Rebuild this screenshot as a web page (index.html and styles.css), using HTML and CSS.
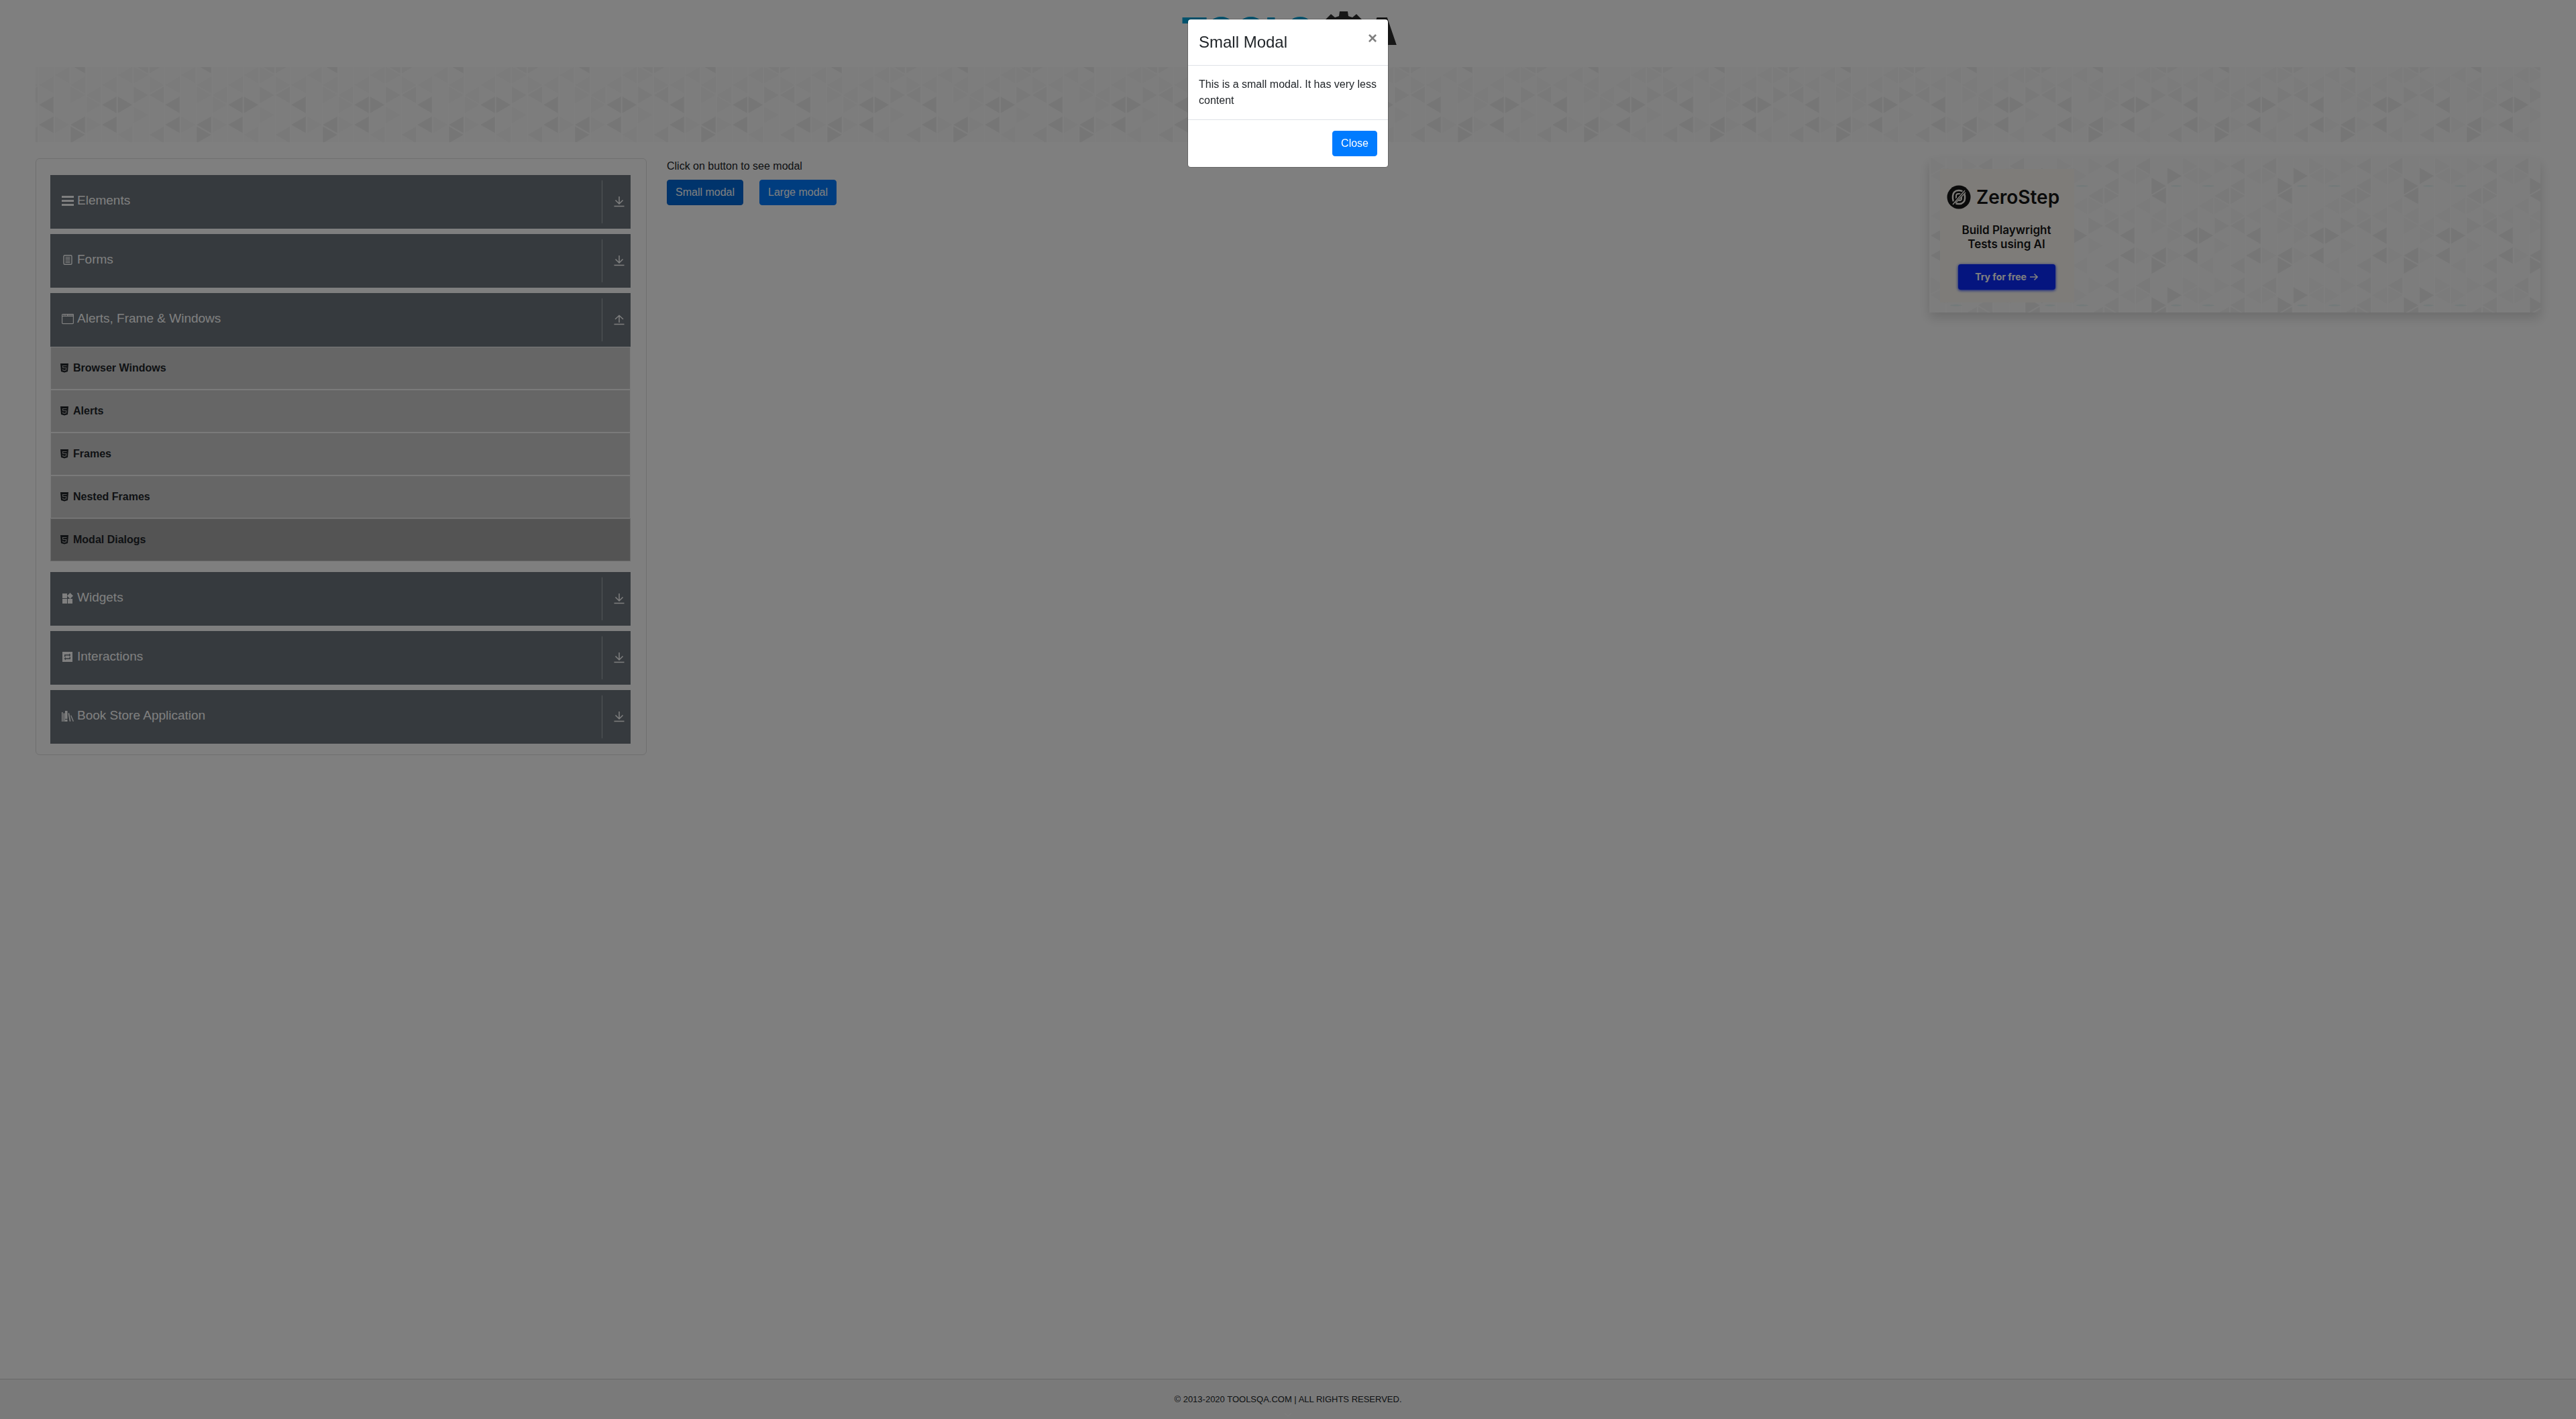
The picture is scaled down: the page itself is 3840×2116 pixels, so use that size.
FILE: index.html
```html
<!DOCTYPE html>
<html lang="en">
<head>
<meta charset="utf-8">
<title>ToolsQA</title>
<link rel="stylesheet" href="styles.css">
</head>
<body>
<svg class="sprite" aria-hidden="true">
  <symbol id="i-down" viewBox="0 0 16 16"><path d="M8 0v11M2.500 5.500L8 11l5.500-5.500M0.500 14.500h15" fill="none" stroke="currentColor" stroke-width="1.500"/></symbol>
  <symbol id="i-up" viewBox="0 0 16 16"><path d="M8 12V1.500M2 7l6-5.500L14 7M0.500 14.500h15" fill="none" stroke="currentColor" stroke-width="1.500"/></symbol>
  <symbol id="i-html" viewBox="0 0 12 14"><path fill="currentColor" d="M0 0h12l-1 12-5 1.500L1 12z"/><path d="M9.500 3.500h-6l.3 3h5l-.3 3.300L6 10.500l-2.300-.7-.1-1.300" fill="none" stroke="#a8a8a8" stroke-width="1.200"/></symbol>
</svg>
<div class="page">
  <header class="top">
    <a class="logo" href="#" aria-label="Tools QA">
      <svg width="316" height="64" viewBox="0 0 316 64">
        <text class="logo-text" x="-1" y="54" fill="#00a5db">TOOLS</text>
        <path fill="#2f2f2f" d="M235 4h12l1 7 6 2 6-5 9 9-5 6 3 6 7 1v12l-7 1-3 6 5 6-9 9-6-5-6 2-1 3h-12l-1-3-6-2-6 5-9-9 5-6-3-6-7-1V30l7-1 3-6-5-6 9-9 6 5 6-2z"/>
        <circle cx="241" cy="34" r="14" fill="#fff"/>
        <text class="logo-text" x="321" y="54" text-anchor="end" fill="#2f2f2f">A</text>
      </svg>
    </a>
  </header>
  <div class="banner pattern"></div>
  <main class="columns">
    <nav class="menu">
      <section><button class="group" type="button"><svg class="icon" viewBox="0 0 18 16"><path fill="currentColor" d="M0 0h18v3H0zM0 6h18v3H0zM0 12h18v3H0z"/></svg><span class="name">Elements</span><span class="toggle"><svg><use href="#i-down"/></svg></span></button></section>
      <section><button class="group" type="button"><svg class="icon" viewBox="0 0 18 16"><rect x="3" y=".7" width="12" height="13.600" rx="1.500" fill="none" stroke="currentColor" stroke-width="1.400"/><path stroke="currentColor" d="M5.500 3.500h7M5.500 5.500h7M5.500 7.500h7M5.500 9.500h7M5.500 11.500h7"/></svg><span class="name">Forms</span><span class="toggle"><svg><use href="#i-down"/></svg></span></button></section>
      <section>
        <button class="group" type="button"><svg class="icon" viewBox="0 0 18 16"><rect x=".6" y=".6" width="16.800" height="14" rx="1" fill="none" stroke="currentColor" stroke-width="1.200"/><path stroke="currentColor" d="M0 3.500h18M3.500 0v3M6 0v3M8.500 0v3"/><path fill="currentColor" opacity=".5" d="M9 0h9v3H9z"/></svg><span class="name">Alerts, Frame &amp; Windows</span><span class="toggle"><svg><use href="#i-up"/></svg></span></button>
        <ul class="items">
          <li><a href="#"><svg><use href="#i-html"/></svg>Browser Windows</a></li>
          <li><a href="#"><svg><use href="#i-html"/></svg>Alerts</a></li>
          <li><a href="#"><svg><use href="#i-html"/></svg>Frames</a></li>
          <li><a href="#"><svg><use href="#i-html"/></svg>Nested Frames</a></li>
          <li class="active"><a href="#"><svg><use href="#i-html"/></svg>Modal Dialogs</a></li>
        </ul>
      </section>
      <section><button class="group" type="button"><svg class="icon" viewBox="0 0 18 16"><path fill="currentColor" d="M1 1h7v7H1zM1 9h7v7H1zM9 9h7v7H9zM12.500 0L17 4.500 12.500 9 8 4.500z"/></svg><span class="name">Widgets</span><span class="toggle"><svg><use href="#i-down"/></svg></span></button></section>
      <section><button class="group" type="button"><svg class="icon" viewBox="0 0 18 16"><path fill="currentColor" fill-rule="evenodd" d="M1 0h15v15H1zM4 4v3.500h1.500v-2H11V7l2.500-2.300L11 2.500V4zM13 11V7.500h-1.500v2H6V8l-2.500 2.300L6 12.500V11z"/></svg><span class="name">Interactions</span><span class="toggle"><svg><use href="#i-down"/></svg></span></button></section>
      <section><button class="group" type="button"><svg class="icon" viewBox="0 0 18 16"><path fill="currentColor" d="M0 2h1.500v14H0zM2.500 3.500h2V16h-2zM5 0h3.500v12H5zM5 13h3.500v3H5zM9.500 3.500l1.700-.3L13.500 15.600l-1.700.3zM13 7l1.200-.4L18 15.400l-1.300.5z"/></svg><span class="name">Book Store Application</span><span class="toggle"><svg><use href="#i-down"/></svg></span></button></section>
    </nav>
    <section class="content">
      <p>Click on button to see modal</p>
      <div class="actions">
        <button class="btn pressed" type="button">Small modal</button>
        <button class="btn" type="button">Large modal</button>
      </div>
    </section>
    <aside class="promo pattern">
      <a class="ad" href="#">
        <span class="brand"><svg width="36" height="36" viewBox="0 0 36 36"><circle cx="18" cy="18" r="17.500" fill="#161616"/><rect x="9" y="8" width="18" height="20" rx="8" fill="none" stroke="#fcf9f2" stroke-width="2.500"/><rect x="14" y="13" width="8" height="10" rx="3" fill="none" stroke="#fcf9f2" stroke-width="2"/><path d="M8 30L28 8" stroke="#161616" stroke-width="5"/><path d="M9 29L27 8M13 27L28 11" stroke="#fcf9f2" stroke-width="1.500"/></svg>ZeroStep</span>
        <span class="pitch">Build Playwright<br>Tests using AI</span>
        <span class="cta">Try for free <svg width="12" height="12" viewBox="0 0 12 12"><path d="M0 6h11M6.500 1.500L11 6l-4.500 4.500" fill="none" stroke="currentColor" stroke-width="1.600"/></svg></span>
      </a>
    </aside>
  </main>
  <footer class="foot">© 2013-2020 TOOLSQA.COM | ALL RIGHTS RESERVED.<svg class="chevron" viewBox="0 0 12 6"><path d="M1 0l5 5 5-5" fill="none" stroke="currentColor"/></svg></footer>
</div>
<div class="overlay">
  <div class="modal" role="dialog" aria-modal="true" aria-labelledby="modal-title">
    <div class="modal-head"><h4 id="modal-title">Small Modal</h4><button class="dismiss" type="button" aria-label="Dismiss">×</button></div>
    <div class="modal-body">This is a small modal. It has very less content</div>
    <div class="modal-foot"><button class="btn" type="button">Close</button></div>
  </div>
</div>
</body>
</html>
```
FILE: styles.css
```css
*{box-sizing:border-box}
body{margin:0;font:16px/24px "Liberation Sans",Arial,sans-serif;color:#212529;background:#fff}
button{font:inherit;cursor:pointer}
a{color:inherit;text-decoration:none}
.sprite{position:absolute;width:0;height:0}
.page{min-height:100vh;display:flex;flex-direction:column}
.top{height:100px;display:flex;justify-content:center;align-items:flex-start;padding-top:13px}
.logo svg{overflow:visible}
.logo-text{font:900 57px Inter,"Liberation Sans",sans-serif}
.pattern{
  background-color:#fafafa;
  background-size:188px 178px;
  background-image:url("data:image/svg+xml,%3Csvg xmlns='http://www.w3.org/2000/svg' viewBox='0 0 564 534'%3E%3Cdefs%3E%3Cpath id='r' d='M3 -37L67 0L3 37z'/%3E%3Cpath id='l' d='M67 -37L3 0L67 37z'/%3E%3C/defs%3E%3Cg fill='%23ededed'%3E%3Cuse href='%23r' x='497' y='79'/%3E%3Cuse href='%23r' x='427' y='124'/%3E%3Cuse href='%23l' x='427' y='168'/%3E%3Cuse href='%23l' x='4' y='346'/%3E%3Cuse href='%23r' x='74' y='346'/%3E%3Cuse href='%23l' x='286' y='346'/%3E%3Cuse href='%23l' x='4' y='435'/%3E%3Cuse href='%23l' x='286' y='435'/%3E%3Cuse href='%23l' x='427' y='435'/%3E%3Cuse href='%23r' x='427' y='480'/%3E%3C/g%3E%3Cg fill='%23f2f2f2'%3E%3Cuse href='%23l' x='145' y='168'/%3E%3Cuse href='%23r' x='216' y='168'/%3E%3Cuse href='%23r' x='145' y='302'/%3E%3Cuse href='%23l' x='216' y='302'/%3E%3Cuse href='%23l' x='216' y='480'/%3E%3Cuse href='%23l' x='216' y='35'/%3E%3Cuse href='%23l' x='216' y='124'/%3E%3Cuse href='%23l' x='357' y='35'/%3E%3C/g%3E%3Cg fill='%23f7f7f7'%3E%3Cuse href='%23r' x='357' y='79'/%3E%3Cuse href='%23r' x='74' y='79'/%3E%3Cuse href='%23l' x='4' y='79'/%3E%3Cuse href='%23l' x='286' y='79'/%3E%3Cuse href='%23r' x='145' y='35'/%3E%3Cuse href='%23r' x='4' y='35'/%3E%3Cuse href='%23l' x='74' y='213'/%3E%3Cuse href='%23r' x='145' y='213'/%3E%3Cuse href='%23r' x='216' y='257'/%3E%3Cuse href='%23l' x='286' y='257'/%3E%3Cuse href='%23l' x='427' y='257'/%3E%3Cuse href='%23l' x='4' y='257'/%3E%3Cuse href='%23r' x='427' y='302'/%3E%3Cuse href='%23l' x='497' y='302'/%3E%3Cuse href='%23r' x='497' y='346'/%3E%3Cuse href='%23r' x='145' y='391'/%3E%3Cuse href='%23r' x='357' y='435'/%3E%3Cuse href='%23r' x='497' y='435'/%3E%3Cuse href='%23l' x='74' y='480'/%3E%3Cuse href='%23l' x='357' y='213'/%3E%3C/g%3E%3Cg fill='none' stroke='%23fdfdfd' stroke-width='4'%3E%3Cpath d='M4 0V534M74 0V534M145 0V534M216 0V534M286 0V534M357 0V534M427 0V534M498 0V534'/%3E%3C/g%3E%3Cg fill='%23e6f4f4'%3E%3Cellipse cx='120' cy='124' rx='28' ry='4'/%3E%3Cellipse cx='540' cy='124' rx='24' ry='4'/%3E%3C/g%3E%3C/svg%3E");
}
.banner{height:112px;margin:0 53px;background-position:97px -59px}
.columns{flex:1;display:grid;grid-template-columns:repeat(12,minmax(0,1fr));column-gap:30px;align-items:start;padding:24px 53px}
.menu{grid-column:span 3;border:1px solid #dfdfdf;border-radius:6px;padding:24px 23px 8px 21px}
.menu section{margin-bottom:8px}
.group{display:flex;align-items:center;width:100%;height:80px;padding:8px 0 8px 17px;border:0;background:#6c757d;color:#fff;font-size:19px;text-align:left}
.icon{width:18px;height:16px;margin:0 5px 2px 0}
.name{flex:1;padding-bottom:4px}
.toggle{align-self:stretch;width:43px;border-left:1px solid #a7acb1;display:flex;align-items:center;padding-left:17px}
.toggle svg{width:16px;height:16px}
.items{list-style:none;margin:0 0 16px;padding:0}
.items li{height:64px;border:1px solid #f4f4f4;background:#ccc;font-weight:bold}
.items .active{background:#a9a9a9;border-color:#d2d2d2}
.items a{display:flex;align-items:center;height:100%;padding:0 14px}
.items svg{width:12px;height:14px;margin-right:7px}
.content{grid-column:span 6}
.content p{margin:0 0 8px}
.actions{display:flex;gap:24px}
.btn{height:38px;padding:6px 12px;border:1px solid #007bff;border-radius:4px;background:#007bff;color:#fff}
.pressed{background:#0069d9;border-color:#0062cc}
.promo{grid-column:span 3;padding:16px 16px 15px;box-shadow:0 8px 16px rgba(0,0,0,.15)}
.ad{width:200px;height:199px;background:#fcf9f2;display:flex;flex-direction:column;align-items:center;font-family:Inter,sans-serif;color:#161616;padding:24px 2px 0 0}
.brand{display:flex;align-items:center;gap:8px;height:36px;margin-right:10px;font-size:28px;font-weight:600}
.pitch{margin-top:21px;font-size:17px;line-height:21px;font-weight:600;text-align:center}
.cta{width:145px;height:38px;margin-top:19px;border-radius:4px;background:#0a2bff;color:#fff;font-size:14px;font-weight:700;display:flex;align-items:center;justify-content:center;gap:5px;box-shadow:0 1px 4px #0a2bff}
.foot{height:60px;border-top:1px solid #d0d0d0;background:#f5f5f5;font-size:13px;display:flex;flex-direction:column;align-items:center;padding-top:18px}
.chevron{width:12px;height:6px;margin-top:8px;color:#fff}
.overlay{position:fixed;inset:0;background:rgba(0,0,0,.5)}
.modal{width:300px;margin:28px auto;border:1px solid rgba(0,0,0,.2);border-radius:5px;background:#fff;background-clip:padding-box}
.modal-head{display:flex;justify-content:space-between;padding:16px;border-bottom:1px solid #dee2e6}
.modal h4{margin:0;font-size:24px;line-height:36px;font-weight:500}
.dismiss{border:0;background:none;padding:0;width:14px;height:24px;font-size:24px;line-height:24px;font-weight:bold;color:#7f7f7f}
.modal-body{padding:16px}
.modal-foot{display:flex;justify-content:flex-end;padding:16px;border-top:1px solid #dee2e6}
```
